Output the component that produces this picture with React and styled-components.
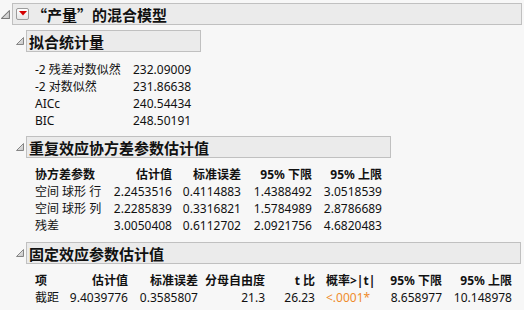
import React from "react";
import styled, { createGlobalStyle } from "styled-components";

const Global = createGlobalStyle`
  html, body { margin: 0; padding: 0; background: #f7f7f7; }
  body {
    font-family: "Noto Sans", "Noto Sans CJK SC", sans-serif;
    font-size: 12px;
    color: #111;
  }
`;

const Page = styled.div`
  width: 524px;
  height: 310px;
  padding-top: 3px;
  box-sizing: border-box;
  overflow: hidden;
`;

const HeaderRow = styled.div`
  display: flex;
  align-items: center;
  gap: ${(p) => p.$gap ?? 2}px;
  padding-left: ${(p) => p.$indent}px;
  margin-top: ${(p) => p.$top ?? 0}px;
`;

const TitleBox = styled.div`
  box-sizing: border-box;
  width: ${(p) => p.$w}px;
  height: 22px;
  display: flex;
  align-items: center;
  gap: ${(p) => p.$gap ?? 0}px;
  padding-left: ${(p) => p.$pad ?? 2}px;
  background: #ebebeb;
  border: 1px solid #c0c0c0;
  font-family: "Noto Sans CJK SC", "Noto Sans", sans-serif;
  font-weight: 700;
  font-size: 15px;
  color: #111;
  white-space: nowrap;
`;

const MenuButton = styled.span`
  box-sizing: border-box;
  width: 13px;
  height: 12px;
  border: 1px solid #9c9c9c;
  border-radius: 2px;
  background: linear-gradient(#ffffff, #e6e6e6);
  display: flex;
  justify-content: center;
  padding-top: 2px;
  flex: none;
`;

const Disclosure = ({ size }) => (
  <svg width={size} height={size} viewBox="0 0 8 8" style={{ flex: "none" }}>
    <defs>
      <linearGradient id="dg" x1="0" y1="0" x2="1" y2="1">
        <stop offset="0" stopColor="#f4f4f4" />
        <stop offset="1" stopColor="#c4c4c4" />
      </linearGradient>
    </defs>
    <polygon points="0.5,7.5 7.5,0.5 7.5,7.5" fill="url(#dg)" stroke="#7a7a7a" strokeWidth="0.9" strokeLinejoin="round" />
  </svg>
);

const RedArrow = () => (
  <svg width="8" height="5" viewBox="0 0 8 5">
    <polygon points="0,0 8,0 4,4.5" fill="#d40000" />
  </svg>
);

const Grid = styled.div`
  display: grid;
  grid-template-columns: ${(p) => p.$cols};
  grid-auto-rows: 17px;
  line-height: 17px;
  padding-left: 35px;
  margin-top: ${(p) => p.$top}px;
  white-space: nowrap;
`;

const Cell = styled.div`
  text-align: ${(p) => (p.$left ? "left" : "right")};
  padding-left: ${(p) => p.$pl ?? 0}px;
  font-weight: ${(p) => (p.$head ? 700 : 400)};
  color: ${(p) => (p.$warn ? "#ef8c2c" : "#111")};
`;

const Body = styled.div``;

const fit = [
  ["-2 残差对数似然", "232.09009"],
  ["-2 对数似然", "231.86638"],
  ["AICc", "240.54434"],
  ["BIC", "248.50191"],
];

const cov = [
  ["空间 球形 行", "2.2453516", "0.4114883", "1.4388492", "3.0518539"],
  ["空间 球形 列", "2.2285839", "0.3316821", "1.5784989", "2.8786689"],
  ["残差", "3.0050408", "0.6112702", "2.0921756", "4.6820483"],
];

const fixedCols = [25, 68, 70, 67, 50, 61, 66, 70];

export default function App() {
  return (
    <>
      <Global />
      <Page>
        <HeaderRow $indent={1} $gap={2}>
          <Disclosure size={9} />
          <TitleBox $w={510} $pad={3} $gap={3}>
            <MenuButton>
              <RedArrow />
            </MenuButton>
            <span>“产量”的混合模型</span>
          </TitleBox>
        </HeaderRow>
        <Body>
          <HeaderRow $indent={16} $top={5}>
            <Disclosure size={8} />
            <TitleBox $w={175}>拟合统计量</TitleBox>
          </HeaderRow>
          <Grid $cols="98px auto" $top={9}>
            {fit.map(([k, v]) => (
              <React.Fragment key={k}>
                <Cell $left>{k}</Cell>
                <Cell $left>{v}</Cell>
              </React.Fragment>
            ))}
          </Grid>

          <HeaderRow $indent={16} $top={7}>
            <Disclosure size={8} />
            <TitleBox $w={365}>重复效应协方差参数估计值</TitleBox>
          </HeaderRow>
          <Grid $cols="68px 69px 69px 71px 70px" $top={8}>
            <Cell $left $head>协方差参数</Cell>
            <Cell $head>估计值</Cell>
            <Cell $head>标准误差</Cell>
            <Cell $head>95% 下限</Cell>
            <Cell $head>95% 上限</Cell>
            {cov.map((r) =>
              r.map((c, i) => (
                <Cell key={r[0] + i} $left={i === 0}>
                  {c}
                </Cell>
              ))
            )}
          </Grid>

          <HeaderRow $indent={16} $top={8}>
            <Disclosure size={8} />
            <TitleBox $w={495}>固定效应参数估计值</TitleBox>
          </HeaderRow>
          <Grid $cols={fixedCols.map((c) => c + "px").join(" ")} $top={8}>
            <Cell $left $head>项</Cell>
            <Cell $head>估计值</Cell>
            <Cell $head>标准误差</Cell>
            <Cell $head>分母自由度</Cell>
            <Cell $head>t 比</Cell>
            <Cell $left $head $pl={11}>概率&gt;|t|</Cell>
            <Cell $head>95% 下限</Cell>
            <Cell $head>95% 上限</Cell>
            <Cell $left>截距</Cell>
            <Cell>9.4039776</Cell>
            <Cell>0.3585807</Cell>
            <Cell>21.3</Cell>
            <Cell>26.23</Cell>
            <Cell $left $pl={11} $warn>&lt;.0001*</Cell>
            <Cell>8.658977</Cell>
            <Cell>10.148978</Cell>
          </Grid>
        </Body>
      </Page>
    </>
  );
}
